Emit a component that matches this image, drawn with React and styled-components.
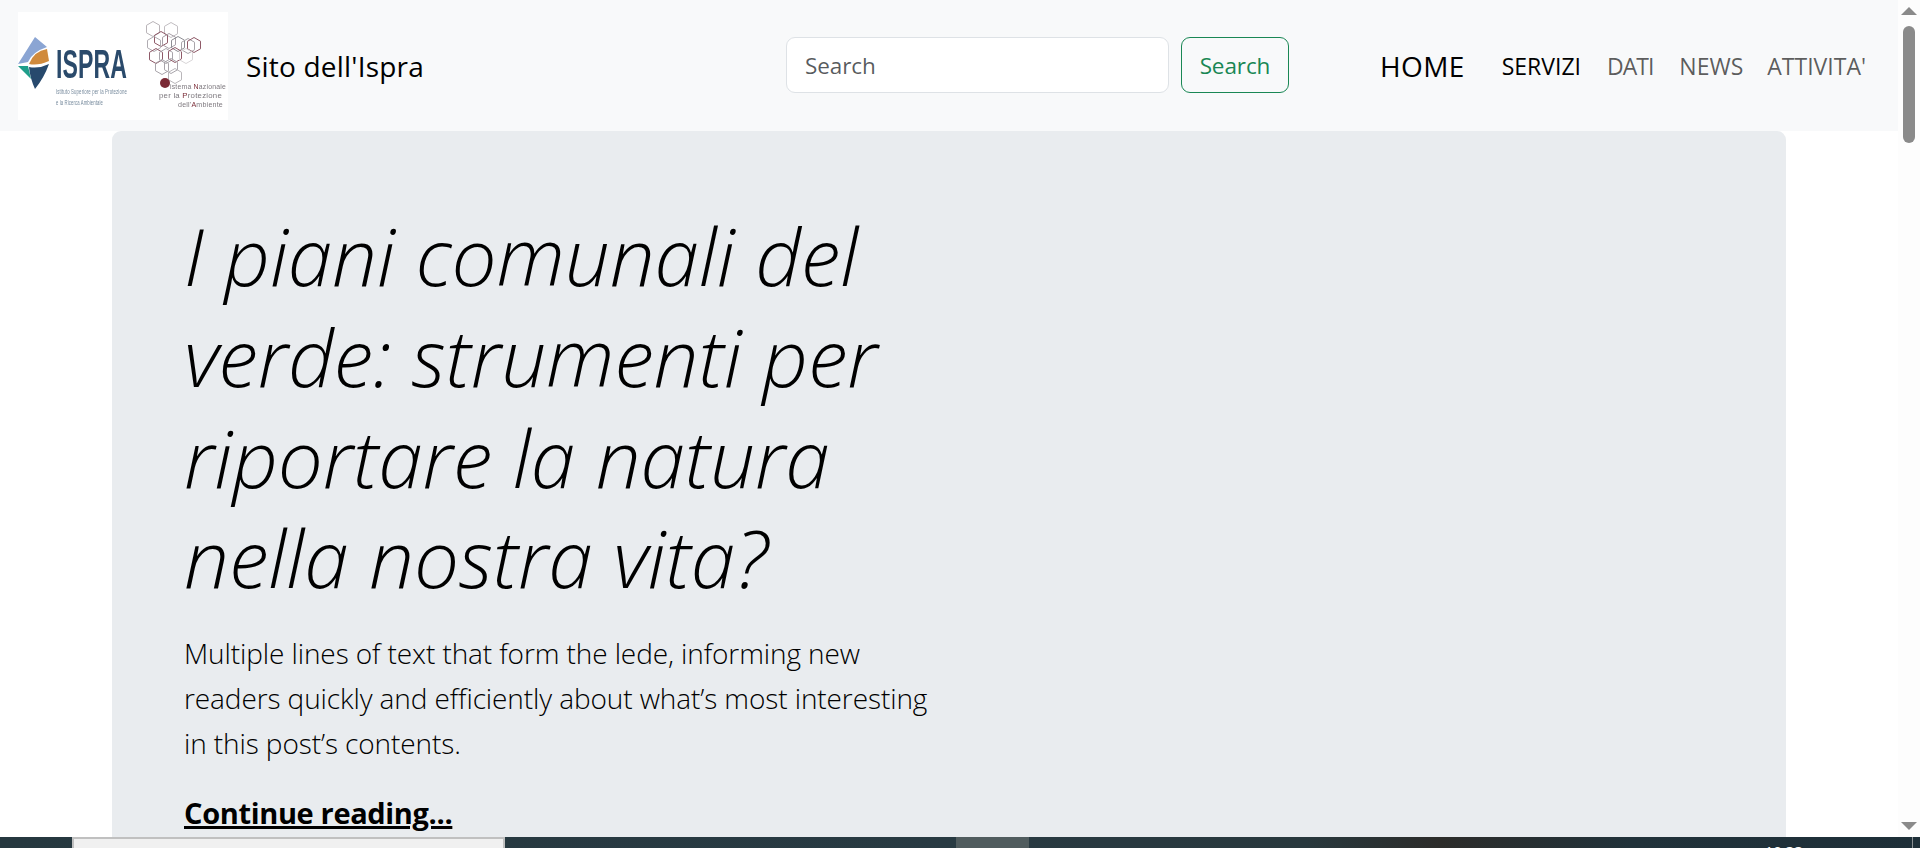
import React from 'react';
import styled, { createGlobalStyle } from 'styled-components';

const GlobalStyle = createGlobalStyle`
  html, body {
    margin: 0;
    height: 100%;
    overflow: hidden;
    background: #fff;
  }
  * { box-sizing: border-box; }
`;

const Screen = styled.div`
  display: flex;
  flex-direction: column;
  height: 848px;
  font-family: "Open Sans", "Noto Sans", sans-serif;
  color: #212529;
`;

const Viewport = styled.div`
  display: flex;
  height: 837px;
  overflow: hidden;
`;

const Page = styled.div`
  flex: 1;
  min-width: 0;
`;

const Navbar = styled.nav`
  display: flex;
  align-items: center;
  height: 131px;
  padding: 0 32px 0 18px;
  background: #f8f9fa;
`;

const Brand = styled.a`
  display: flex;
  align-items: center;
  gap: 18px;
  font-size: 28px;
  letter-spacing: 0.2px;
  color: #000;
`;

const SearchForm = styled.form`
  display: flex;
  gap: 12px;
  margin: 0 0 2px 362px;
`;

const SearchInput = styled.input`
  width: 383px;
  height: 56px;
  padding: 2px 18px 0;
  border: 1.5px solid #dee2e6;
  border-radius: 9px;
  background: #fff;
  font: inherit;
  font-size: 22.5px;
  letter-spacing: -0.1px;
  &::placeholder {
    color: rgba(33, 37, 41, 0.75);
    opacity: 1;
  }
`;

const SearchButton = styled.button`
  width: 108px;
  height: 56px;
  padding: 2px 0 0;
  border: 1.5px solid #198754;
  border-radius: 9px;
  background: transparent;
  color: #198754;
  font: inherit;
  font-size: 22.5px;
  letter-spacing: -0.1px;
`;

const NavLinks = styled.ul`
  display: flex;
  align-items: center;
  margin: 0 0 0 auto;
  padding: 0;
  list-style: none;
`;

const NavItem = styled.li`
  margin-left: ${(p) => p.$gap}px;
  font-size: ${(p) => (p.$large ? 28 : 23)}px;
  letter-spacing: ${(p) => p.$spacing || 0}px;
  color: ${(p) => (p.$active ? '#000' : 'rgba(0, 0, 0, 0.65)')};
`;

const Jumbotron = styled.section`
  height: 706px;
  margin: 0 112px;
  padding: 74px 72px 0;
  border-radius: 9px 9px 0 0;
  background: #e9ecef;
  color: #000;
`;

const Column = styled.div`
  width: 752px;
`;

const Headline = styled.h1`
  margin: 0 0 23px;
  font-size: 80px;
  font-weight: 300;
  font-style: italic;
  line-height: 100.8px;
  letter-spacing: -0.15px;
`;

const Lead = styled.p`
  margin: 0 0 27px;
  font-size: 28px;
  font-weight: 300;
  line-height: 45px;
  letter-spacing: -0.1px;
`;

const ReadMore = styled.a`
  font-size: 29px;
  font-weight: 700;
  letter-spacing: -0.35px;
  color: #000;
  text-decoration: underline;
  text-decoration-thickness: 3px;
`;

const ScrollBar = styled.div`
  position: relative;
  flex: 0 0 22px;
  background: #fdfdfd;
`;

const Arrow = styled.div`
  margin: ${(p) => (p.$down ? '0' : '7px')} 3px 0;
  width: 0;
  height: 0;
  border-left: 8px solid transparent;
  border-right: 8px solid transparent;
  ${(p) => (p.$down
    ? 'position: absolute; bottom: 7px; border-top: 8px solid #8a8a8a;'
    : 'border-bottom: 8px solid #8a8a8a;')}
`;

const Thumb = styled.div`
  width: 12px;
  height: 117px;
  margin: 11px 0 0 5px;
  border-radius: 6px;
  background: #8a8a8a;
`;

const Taskbar = styled.footer`
  display: flex;
  height: 11px;
  overflow: hidden;
  background: linear-gradient(90deg, #26383f 0%, #283a42 50%, #28383d 68%, #2c2c2a 75%, #21323a 85%, #1e2f38 100%);
`;

const TaskSearch = styled.div`
  width: 433px;
  margin-left: 72px;
  border: 2px solid #c0c0c0;
  border-bottom: 0;
  background: #f0f0f0;
`;

const TaskActive = styled.div`
  width: 73px;
  margin-left: 451px;
  background: #505c5e;
`;

const Clock = styled.div`
  margin-left: auto;
  padding-top: 4px;
  font-size: 15px;
  line-height: 20px;
  color: #fff;
`;

const TaskEdge = styled.div`
  width: 1px;
  margin: 0 7px 0 109px;
  background: #8a8f92;
`;

// positions read off the reference logo, in logo pixels
const hexes = [
  [135, 17, '#b9b4b8'], [153, 18, '#c2bec2'], [143, 27, '#8f5a68'], [151, 29, '#a8a0a8'],
  [136, 32, '#b0acb2'], [160, 32, '#8d8d93'], [170, 34, '#a9a5aa'], [176, 33, '#8f5a68'],
  [138, 44, '#8f5a68'], [148, 44, '#a8a4aa'], [157, 43, '#8f5a68'], [168, 44, '#d9d6d8'],
  [144, 55, '#a8a4aa'], [153, 54, '#a8a4aa'], [157, 64, '#b9b6ba'],
];

const hexPoints = (cx, cy, r) =>
  [0, 1, 2, 3, 4, 5]
    .map((i) => {
      const a = (Math.PI / 3) * i + Math.PI / 6;
      return `${(cx + r * Math.cos(a)).toFixed(1)},${(cy + r * Math.sin(a)).toFixed(1)}`;
    })
    .join(' ');

const Logo = () => (
  <svg width="210" height="108" viewBox="0 0 210 108" style={{ filter: 'blur(0.4px)' }}>
    <rect width="210" height="108" fill="#fff" />
    <path d="M17 25 L0 52 L10 50 Q14 40 29 35 Z" fill="#8ba5d3" />
    <path d="M11 52 Q16 39 29 37 L31 49 Q20 54 11 52 Z" fill="#d08a3c" />
    <path d="M0 54 L10 54 L13 67 Z" fill="#1f9e8a" />
    <path d="M11 55 Q21 57 31 52 Q26 66 17 77 Q12 66 11 55 Z" fill="#27496d" />
    <text x="38" y="66" fontFamily="Liberation Sans" fontWeight="700" fontSize="41" fill="#2a4a6b" textLength="71" lengthAdjust="spacingAndGlyphs">ISPRA</text>
    <g fontFamily="Liberation Sans" fontSize="7" fill="#74889b">
      <text x="38" y="82" textLength="71" lengthAdjust="spacingAndGlyphs">Istituto Superiore per la Protezione</text>
      <text x="38" y="93" textLength="47" lengthAdjust="spacingAndGlyphs">e la Ricerca Ambientale</text>
    </g>
    <g fill="none" strokeWidth="1">
      {hexes.map(([x, y, c]) => (
        <polygon key={`${x}-${y}`} points={hexPoints(x, y, 7.5)} stroke={c} />
      ))}
    </g>
    <circle cx="147" cy="71" r="5" fill="#7a2a35" />
    <g fontFamily="Liberation Sans" fontSize="7" fill="#7d787e">
      <text x="152" y="77" textLength="56" lengthAdjust="spacingAndGlyphs">istema <tspan fill="#7a2a35">N</tspan>azionale</text>
      <text x="141" y="86" textLength="63" lengthAdjust="spacingAndGlyphs">per la <tspan fill="#7a2a35">P</tspan>rotezione</text>
      <text x="160" y="95" textLength="45" lengthAdjust="spacingAndGlyphs">dell'<tspan fill="#7a2a35">A</tspan>mbiente</text>
    </g>
  </svg>
);

export default function App() {
  return (
    <Screen>
      <GlobalStyle />
      <Viewport>
        <Page>
          <Navbar>
            <Brand>
              <Logo />
              Sito dell'Ispra
            </Brand>
            <SearchForm>
              <SearchInput placeholder="Search" />
              <SearchButton type="button">Search</SearchButton>
            </SearchForm>
            <NavLinks>
              <NavItem $large $active $gap={0} $spacing={0.4}>HOME</NavItem>
              <NavItem $active $gap={37}>SERVIZI</NavItem>
              <NavItem $gap={26} $spacing={-1}>DATI</NavItem>
              <NavItem $gap={26}>NEWS</NavItem>
              <NavItem $gap={24}>ATTIVITA'</NavItem>
            </NavLinks>
          </Navbar>
          <Jumbotron>
            <Column>
              <Headline>I piani comunali del verde: strumenti per riportare la natura nella nostra vita?</Headline>
              <Lead>Multiple lines of text that form the lede, informing new readers quickly and efficiently about what’s most interesting in this post’s contents.</Lead>
              <ReadMore>Continue reading...</ReadMore>
            </Column>
          </Jumbotron>
        </Page>
        <ScrollBar>
          <Arrow />
          <Thumb />
          <Arrow $down />
        </ScrollBar>
      </Viewport>
      <Taskbar>
        <TaskSearch />
        <TaskActive />
        <Clock>10:33</Clock>
        <TaskEdge />
      </Taskbar>
    </Screen>
  );
}
